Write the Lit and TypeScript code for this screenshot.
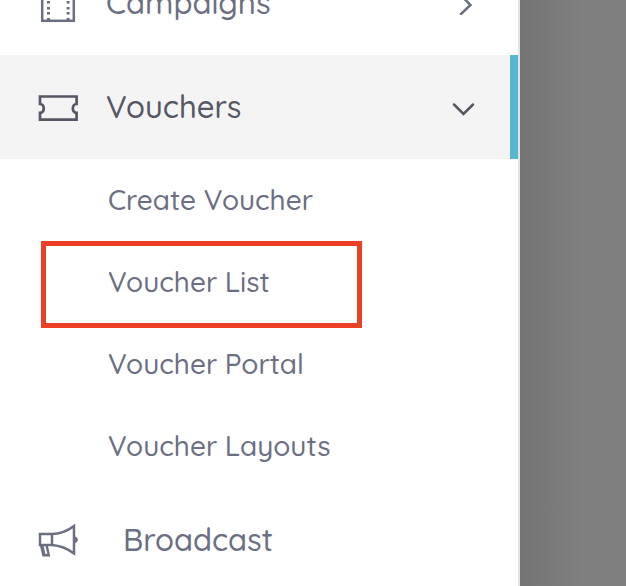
import { LitElement, html, css, svg } from "lit";
import { customElement } from "lit/decorators.js";
import { classMap } from "lit/directives/class-map.js";

const filmHoles = [1, 7, 12, 18, 24, 29, 35];

const icons = {
  film: svg`
    <rect x="4.2" y="1.2" width="31.6" height="36.6" stroke-width="2.5" />
    ${filmHoles.map(
      (y) => svg`
        <rect x="9" y=${y} width="3" height="2.5" fill="currentColor" stroke="none" />
        <rect x="28.6" y=${y} width="3" height="2.5" fill="currentColor" stroke="none" />`
    )}`,
  ticket: svg`
    <path stroke-width="2.7" d="M2 9.5H38.6V17C33.6 17.4 33.6 25.4 38.6 25.8V32.6H2V25.8C7 25.4 7 17.4 2 17Z" />`,
  megaphone: svg`
    <path stroke-width="2.5" d="M2 14H14V25H2ZM14 14C22 14 30 10.5 36 6V33.4C30 29 22 25.6 14 25" />
    <path stroke-width="2.4" d="M3 25L5.4 35.2H10.8L8.6 25.6" />
    <path stroke-width="1.6" d="M4.6 25L6.8 34.6" />
    <path fill="currentColor" stroke="none" d="M37 16.4C40.8 17 40.8 22.4 37 23Z" />`,
};

@customElement("app-root")
export class AppRoot extends LitElement {
  static styles = css`
    :host {
      display: flex;
      height: 100vh;
      overflow: hidden;
      font-family: Quicksand, Lato, sans-serif;
      font-weight: 500;
      color: #6b6f82;
    }
    .sidebar {
      box-sizing: border-box;
      flex: 0 1 520px;
      overflow: hidden;
      background: #fff;
      border-right: 2px solid #e2e2ea;
    }
    /* The menu is scrolled part of the way past its Campaigns row. */
    .menu {
      margin-top: -49px;
    }
    .scrim {
      flex: 1;
      background: linear-gradient(to right, #747474, #7f7f7f 64px);
    }
    .item {
      box-sizing: border-box;
      display: flex;
      align-items: center;
      gap: 28px;
      width: 100%;
      height: 104px;
      padding: 0 42px 0 38px;
      border: 0;
      background: none;
      color: inherit;
      font: inherit;
      font-size: 31px;
      line-height: 40px;
      text-align: left;
      text-decoration: none;
      cursor: pointer;
    }
    .item.open {
      padding-right: 34px;
      border-right: 8px solid #54b8d1;
      background: #f4f4f4;
      color: #555765;
    }
    .item.wide {
      gap: 45px;
    }
    .label {
      flex: 1;
    }
    svg {
      flex: none;
      fill: none;
      stroke: currentColor;
    }
    .icon {
      width: 40px;
      height: 40px;
    }
    .chevron {
      width: 24px;
      height: 24px;
      stroke-width: 2.5;
      stroke-linecap: round;
    }
    .submenu {
      margin: 0;
      padding: 0 0 1px;
      list-style: none;
    }
    .entry {
      position: relative;
    }
    .sub {
      display: flex;
      align-items: center;
      height: 82px;
      padding-left: 108px;
      color: inherit;
      font-size: 28px;
      line-height: 36px;
      text-decoration: none;
    }
    .marked::after {
      content: "";
      position: absolute;
      box-sizing: border-box;
      top: 0;
      left: 41px;
      width: 321px;
      height: 87px;
      border: 5px solid #eb4025;
      pointer-events: none;
    }
  `;

  private entries = ["Create Voucher", "Voucher List", "Voucher Portal", "Voucher Layouts"];

  private icon(name: keyof typeof icons) {
    return html`<svg class="icon" viewBox="0 0 40 40" aria-hidden="true">${icons[name]}</svg>`;
  }

  private chevron(d: string) {
    return html`<svg class="chevron" viewBox="0 0 24 24" aria-hidden="true"><path d=${d} /></svg>`;
  }

  render() {
    return html`
      <aside class="sidebar">
        <nav class="menu">
          <button class="item" aria-expanded="false">
            ${this.icon("film")}
            <span class="label">Campaigns</span>
            ${this.chevron("M9 4.5L18.5 14L9 23")}
          </button>
          <button class="item open" aria-expanded="true">
            ${this.icon("ticket")}
            <span class="label">Vouchers</span>
            ${this.chevron("M2 9.5L11.5 19L21 9.5")}
          </button>
          <ul class="submenu">
            ${this.entries.map(
              (entry) => html`
                <li class=${classMap({ entry: true, marked: entry === "Voucher List" })}>
                  <a class="sub" href="#">${entry}</a>
                </li>`
            )}
          </ul>
          <a class="item wide" href="#">
            ${this.icon("megaphone")}
            <span class="label">Broadcast</span>
          </a>
        </nav>
      </aside>
      <div class="scrim"></div>
    `;
  }
}
